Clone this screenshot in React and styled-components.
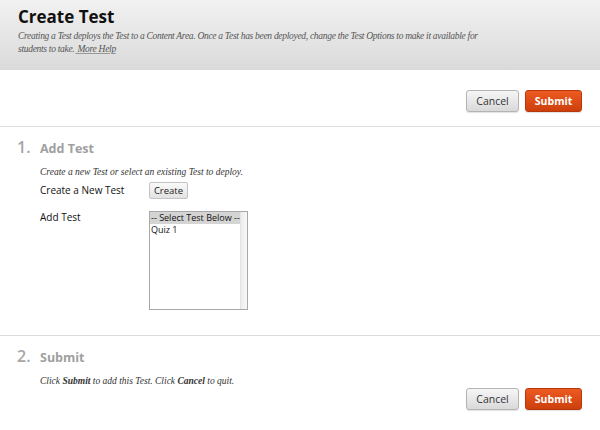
import React from 'react'
import styled, {createGlobalStyle} from 'styled-components'

const Global = createGlobalStyle`
  body {
    margin: 0;
    background: #fff;
    font-family: "Open Sans", "Liberation Sans", sans-serif;
  }
`

const Page = styled.div`
  width: 600px;
  height: 430px;
  overflow: hidden;
  background: #fff;
`

const Header = styled.div`
  height: 70px;
  box-sizing: border-box;
  padding: 5px 18px 0 18px;
  background: linear-gradient(#f1f1f1, #dadada);
`

const Title = styled.h1`
  margin: 0;
  font-size: 17px;
  line-height: 24px;
  font-weight: 700;
  color: #111;
`

const Help = styled.p`
  margin: 1px 0 0 0;
  max-width: 482px;
  font-family: "Liberation Serif", "DejaVu Serif", serif;
  font-style: italic;
  font-size: 9.5px;
  line-height: 13px;
  letter-spacing: -0.3px;
  color: #555;
`

const HelpLink = styled.a`
  margin-left: 1px;
  color: #555;
  text-decoration: underline;
  text-decoration-color: #999;
`

const ButtonBar = styled.div`
  display: flex;
  justify-content: flex-end;
  gap: 6px;
  padding: ${p => p.$top}px 18px 0 0;
  height: ${p => p.$height}px;
  box-sizing: border-box;
  border-bottom: ${p => (p.$line ? '1px solid #dcdcdc' : 'none')};
`

const Button = styled.button`
  height: 22px;
  box-sizing: border-box;
  padding: 0;
  width: ${p => p.$w}px;
  border-radius: 3px;
  font-family: "Open Sans", "Liberation Sans", sans-serif;
  font-size: 10.5px;
  cursor: pointer;
  border: 1px solid ${p => (p.$primary ? '#b8380d' : '#b4b4b4')};
  color: ${p => (p.$primary ? '#fff' : '#333')};
  font-weight: ${p => (p.$primary ? 700 : 400)};
  background: ${p =>
    p.$primary
      ? 'linear-gradient(#ee5a22, #cc3f0c)'
      : 'linear-gradient(#f6f6f6, #d9d9d9)'};
  box-shadow: 0 1px 1px rgba(0, 0, 0, 0.12);
`

const Section = styled.div`
  padding: ${p => p.$top}px 0 0 17px;
  height: ${p => p.$height}px;
  box-sizing: border-box;
  border-bottom: ${p => (p.$line ? '1px solid #dcdcdc' : 'none')};
`

const StepHead = styled.div`
  display: flex;
  align-items: baseline;
  color: #a6a6a6;
  font-weight: 700;
`

const StepNum = styled.span`
  font-size: 16px;
  width: 23px;
  font-weight: 600;
`

const StepTitle = styled.span`
  font-size: 12.5px;
  color: #a0a0a0;
`

const StepBody = styled.div`
  padding-left: 23px;
`

const Note = styled.p`
  margin: ${p => p.$top}px 0 0 0;
  font-family: "Liberation Serif", "DejaVu Serif", serif;
  font-style: italic;
  font-size: 9.5px;
  line-height: 12px;
  color: #333;
  b {
    font-weight: 700;
  }
`

const Row = styled.div`
  display: flex;
  align-items: flex-start;
  margin-top: ${p => p.$top}px;
`

const Label = styled.div`
  width: 109px;
  font-size: 10px;
  line-height: 12px;
  color: #111;
  padding-top: ${p => p.$pad || 0}px;
`

const SmallButton = styled.button`
  height: 17px;
  width: 39px;
  padding: 0;
  box-sizing: border-box;
  font-family: "Open Sans", "Liberation Sans", sans-serif;
  font-size: 9.5px;
  color: #222;
  border: 1px solid #c4c4c4;
  border-radius: 2px;
  background: linear-gradient(#fafafa, #e2e2e2);
`

const ListBox = styled.div`
  width: 99px;
  height: 99px;
  box-sizing: border-box;
  border: 1px solid #a8a8a8;
  display: flex;
  background: #fff;
`

const Options = styled.div`
  flex: 1;
  font-size: 9px;
  line-height: 12px;
  color: #111;
`

const Option = styled.div`
  padding-left: 1px;
  background: ${p => (p.$selected ? '#d4d4d4' : 'transparent')};
  white-space: nowrap;
`

const Track = styled.div`
  width: 9px;
  background: linear-gradient(90deg, #ececec, #f8f8f8);
  border-left: 1px solid #e4e4e4;
`

export default function App() {
  return (
    <Page>
      <Global />
      <Header>
        <Title>Create Test</Title>
        <Help>
          Creating a Test deploys the Test to a Content Area. Once a Test has been deployed, change the Test Options to
          make it available for students to take.<HelpLink href="#"> More Help</HelpLink>
        </Help>
      </Header>

      <ButtonBar $top={20} $height={57} $line>
        <Button $w={53}>Cancel</Button>
        <Button $w={57} $primary>Submit</Button>
      </ButtonBar>

      <Section $top={9} $height={209} $line>
        <StepHead>
          <StepNum>1.</StepNum>
          <StepTitle>Add Test</StepTitle>
        </StepHead>
        <StepBody>
          <Note $top={8}>Create a new Test or select an existing Test to deploy.</Note>
          <Row $top={4}>
            <Label $pad={2}>Create a New Test</Label>
            <SmallButton>Create</SmallButton>
          </Row>
          <Row $top={12}>
            <Label>Add Test</Label>
            <ListBox>
              <Options>
                <Option $selected>-- Select Test Below --</Option>
                <Option>Quiz 1</Option>
              </Options>
              <Track />
            </ListBox>
          </Row>
        </StepBody>
      </Section>

      <Section $top={9} $height={50}>
        <StepHead>
          <StepNum>2.</StepNum>
          <StepTitle>Submit</StepTitle>
        </StepHead>
        <StepBody>
          <Note $top={8}>
            Click <b>Submit</b> to add this Test. Click <b>Cancel</b> to quit.
          </Note>
        </StepBody>
      </Section>

      <ButtonBar $top={2} $height={40}>
        <Button $w={53}>Cancel</Button>
        <Button $w={57} $primary>Submit</Button>
      </ButtonBar>
    </Page>
  )
}
